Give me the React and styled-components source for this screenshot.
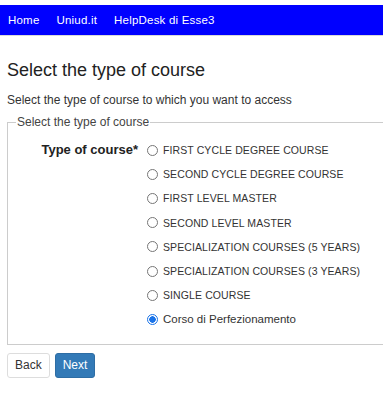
import React, { useState } from 'react';
import styled, { createGlobalStyle } from 'styled-components';

const GlobalStyle = createGlobalStyle`
  html, body {
    margin: 0;
    padding: 0;
    background: #fff;
  }
  body {
    font-family: "Liberation Sans", Arial, sans-serif;
    color: #333;
  }
`;

const Page = styled.div`
  padding-top: 5px;
`;

const NavBar = styled.nav`
  display: flex;
  align-items: center;
  gap: 17px;
  height: 30px;
  padding: 0 8px;
  background: #0000ff;
  border-bottom: 1px solid #d9d9d9;
`;

const NavLink = styled.a`
  color: #fff;
  font-size: 11.5px;
  text-decoration: none;
  letter-spacing: 0.2px;
`;

const Content = styled.main`
  padding: 0 0 0 7px;
`;

const Title = styled.h1`
  margin: 23px 0 0;
  font-size: 18px;
  font-weight: 400;
  color: #222;
  line-height: 22px;
`;

const Lead = styled.p`
  margin: 11px 0 0;
  font-size: 12px;
  line-height: 16px;
  color: #333;
`;

const Fieldset = styled.fieldset`
  margin: 6px 0 0;
  padding: 8px 0 12px;
  border: 1px solid #ccc;
  border-right: none;
  border-radius: 0;
`;

const Legend = styled.legend`
  padding: 0 1px;
  margin-left: 8px;
  font-size: 12px;
  line-height: 16px;
  color: #444;
`;

const FieldRow = styled.div`
  display: grid;
  grid-template-columns: 130px 1fr;
  column-gap: 9px;
`;

const Label = styled.div`
  text-align: right;
  font-weight: 700;
  font-size: 13px;
  color: #222;
  line-height: 24px;
`;

const Options = styled.div`
  display: flex;
  flex-direction: column;
`;

const Option = styled.label`
  display: flex;
  align-items: center;
  gap: 5px;
  height: 24.2px;
  font-size: ${(p) => (p.$upper ? '10.5px' : '11.5px')};
  color: #333;
  letter-spacing: ${(p) => (p.$upper ? '0.1px' : '0')};
  white-space: nowrap;
`;

const Radio = styled.input`
  appearance: none;
  flex: none;
  margin: 0;
  width: 11px;
  height: 11px;
  border-radius: 50%;
  border: 1px solid #767676;
  background: #fff;
  box-sizing: border-box;

  &:checked {
    border-color: #1a73e8;
    background: radial-gradient(circle, #1a73e8 0 3px, #fff 3.5px);
  }
`;

const Actions = styled.div`
  display: flex;
  gap: 5px;
  margin-top: 8px;
`;

const Button = styled.button`
  height: 25px;
  padding: 0 7px;
  border-radius: 3px;
  font-family: inherit;
  font-size: 12px;
  border: 1px solid ${(p) => (p.$primary ? '#2e6da4' : '#ddd')};
  background: ${(p) => (p.$primary ? '#337ab7' : '#fff')};
  color: ${(p) => (p.$primary ? '#fff' : '#333')};
`;

const courses = [
  'FIRST CYCLE DEGREE COURSE',
  'SECOND CYCLE DEGREE COURSE',
  'FIRST LEVEL MASTER',
  'SECOND LEVEL MASTER',
  'SPECIALIZATION COURSES (5 YEARS)',
  'SPECIALIZATION COURSES (3 YEARS)',
  'SINGLE COURSE',
  'Corso di Perfezionamento',
];

const App = () => {
  const [selected, setSelected] = useState(courses[7]);

  return (
    <Page>
      <GlobalStyle />
      <NavBar>
        <NavLink href="#">Home</NavLink>
        <NavLink href="#">Uniud.it</NavLink>
        <NavLink href="#">HelpDesk di Esse3</NavLink>
      </NavBar>
      <Content>
        <Title>Select the type of course</Title>
        <Lead>Select the type of course to which you want to access</Lead>
        <Fieldset>
          <Legend>Select the type of course</Legend>
          <FieldRow>
            <Label>Type of course*</Label>
            <Options>
              {courses.map((c) => (
                <Option key={c} $upper={c === c.toUpperCase()}>
                  <Radio
                    type="radio"
                    name="course"
                    checked={selected === c}
                    onChange={() => setSelected(c)}
                  />
                  {c}
                </Option>
              ))}
            </Options>
          </FieldRow>
        </Fieldset>
        <Actions>
          <Button>Back</Button>
          <Button $primary>Next</Button>
        </Actions>
      </Content>
    </Page>
  );
};

export default App;
